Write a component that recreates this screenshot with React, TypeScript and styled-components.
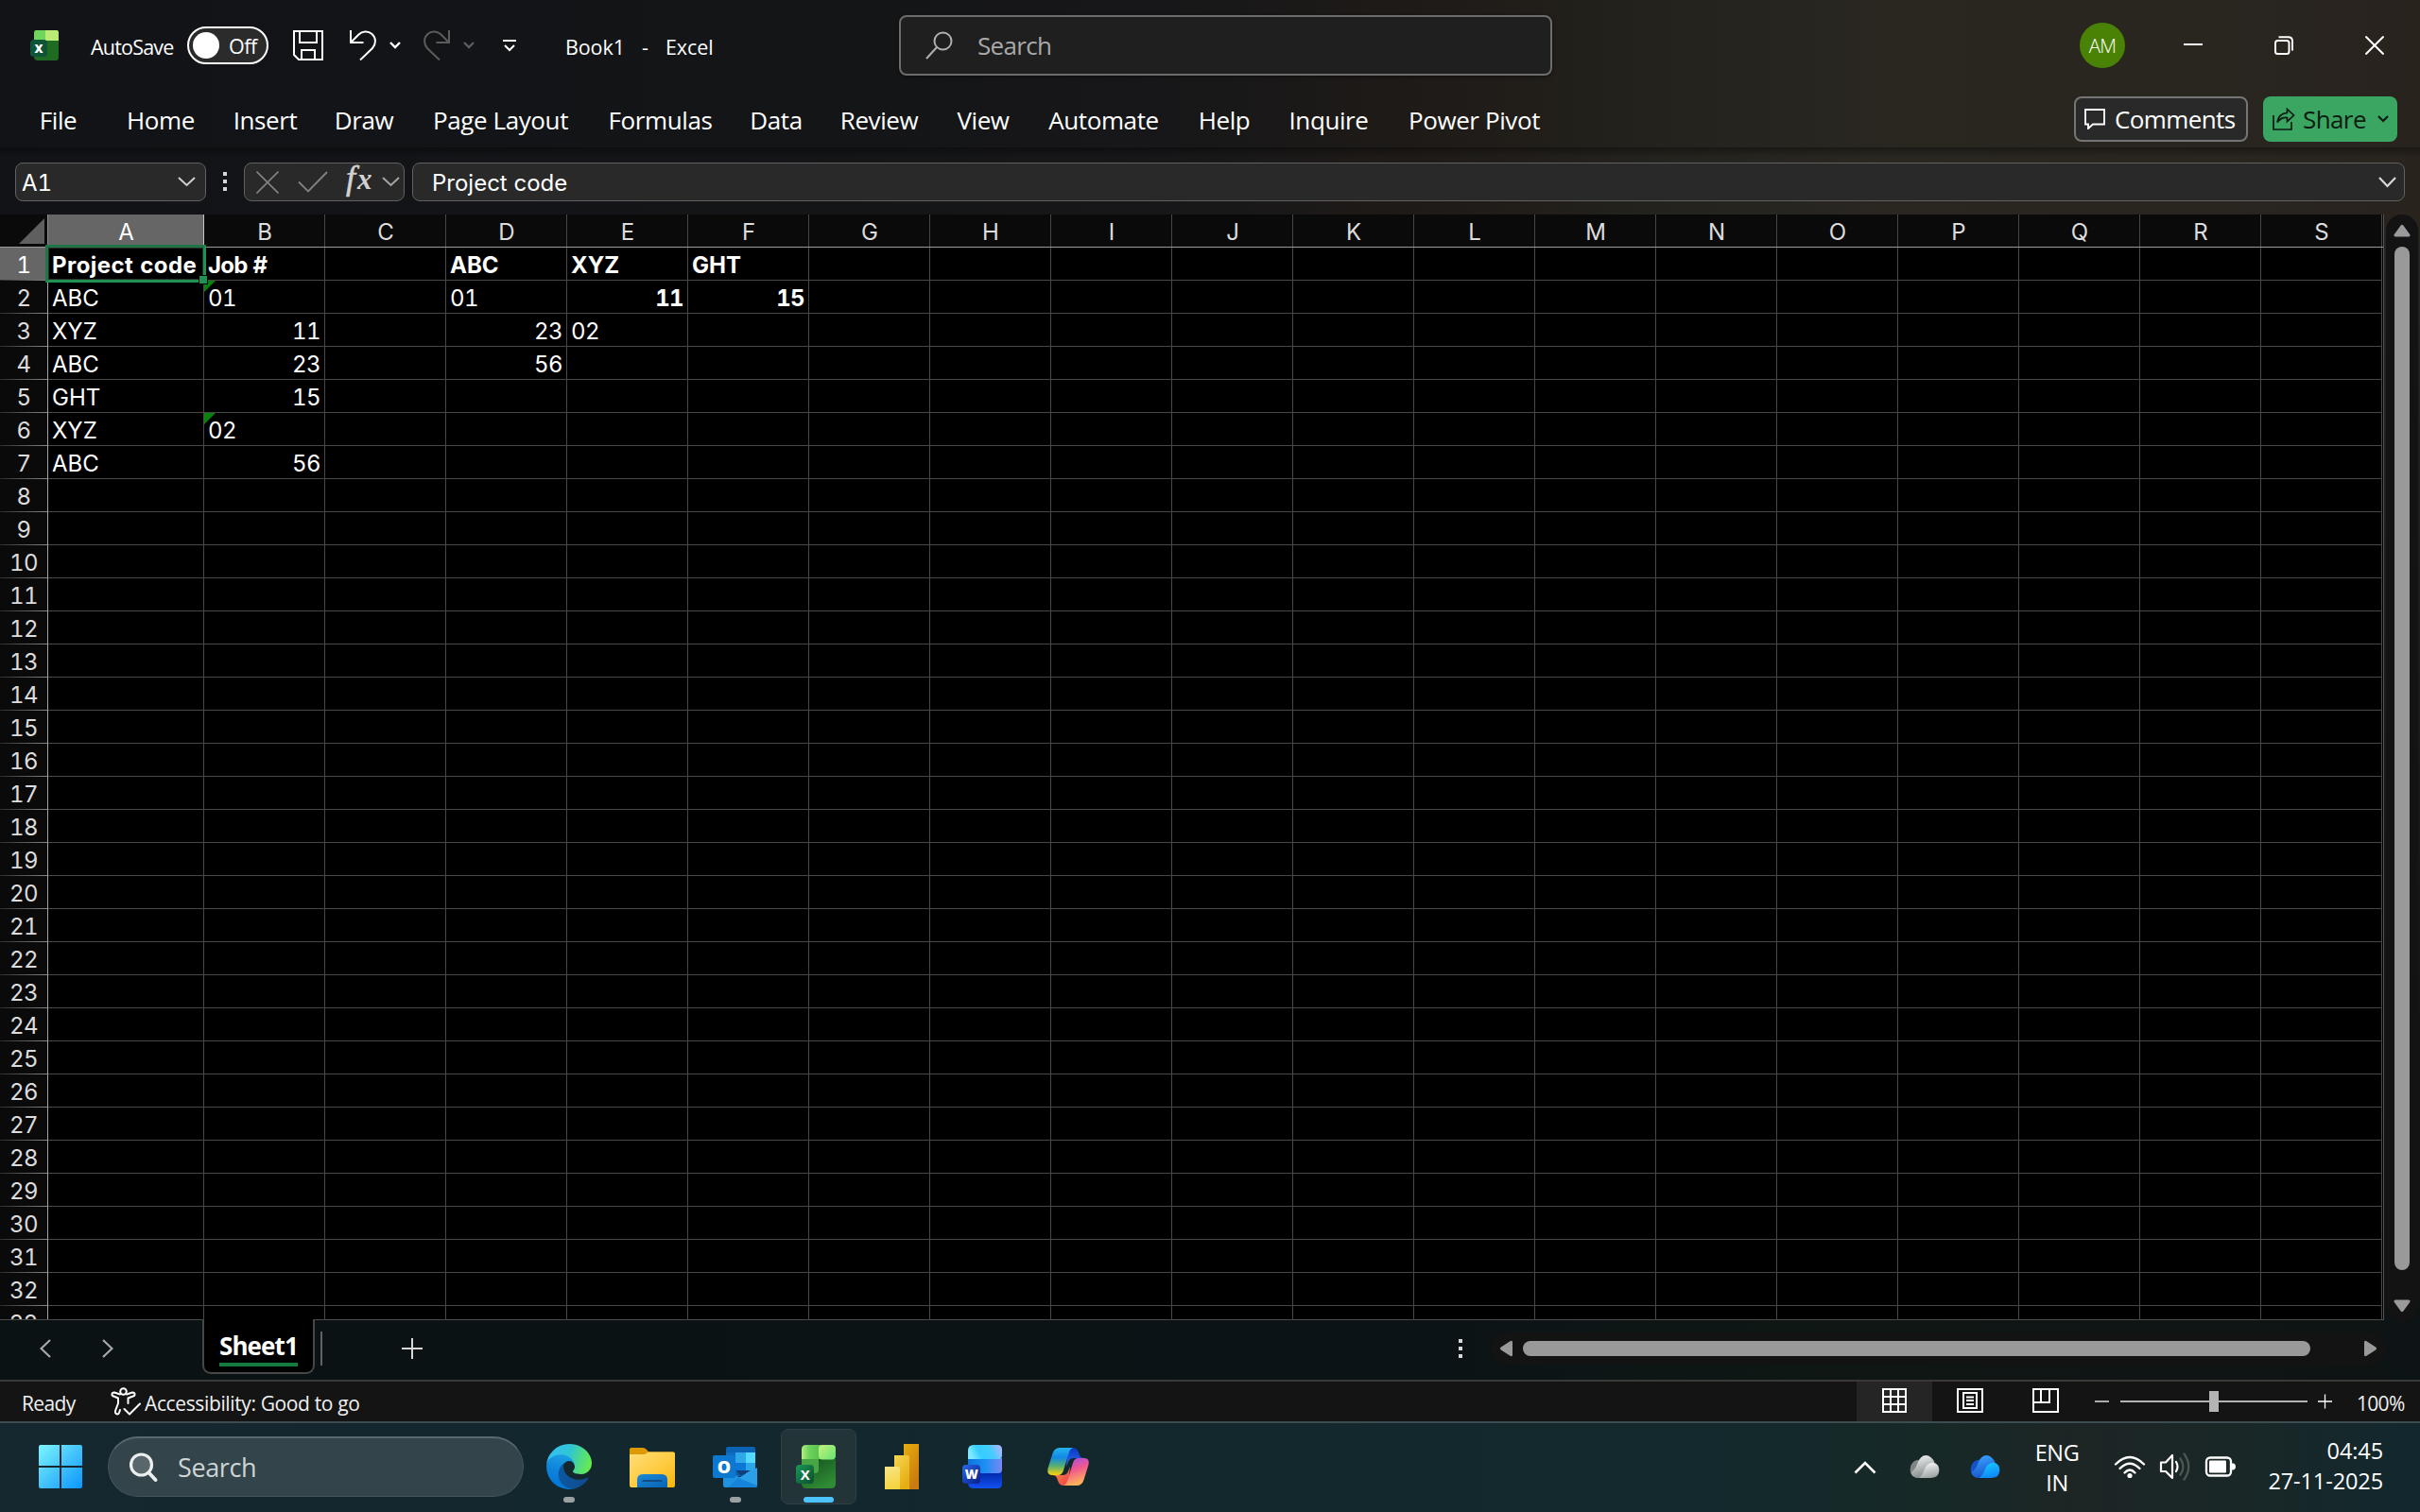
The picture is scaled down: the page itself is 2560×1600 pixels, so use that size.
import { ReactNode } from "react";
import styled, { createGlobalStyle } from "styled-components";

const UI = `"Open Sans", "Noto Sans", sans-serif`;
const SHEET = `Inter, "Liberation Sans", sans-serif`;

type CellData = { text: string; bold?: boolean; right?: boolean; flag?: boolean; track?: number };

const columns = "ABCDEFGHIJKLMNOPQRS".split("");
const rows = Array.from({ length: 33 }, (_, i) => i + 1);

const cells: Record<string, CellData> = {
    A1: { text: "Project code", bold: true, track: 0.45 },
    B1: { text: "Job #", bold: true, track: -0.7 },
    D1: { text: "ABC", bold: true },
    E1: { text: "XYZ", bold: true },
    F1: { text: "GHT", bold: true },
    A2: { text: "ABC" },
    B2: { text: "01", flag: true, track: -0.5 },
    D2: { text: "01", track: -0.5 },
    E2: { text: "11", bold: true, right: true },
    F2: { text: "15", bold: true, right: true },
    A3: { text: "XYZ" },
    B3: { text: "11", right: true },
    D3: { text: "23", right: true },
    E3: { text: "02", track: -0.5 },
    A4: { text: "ABC" },
    B4: { text: "23", right: true },
    D4: { text: "56", right: true },
    A5: { text: "GHT" },
    B5: { text: "15", right: true },
    A6: { text: "XYZ" },
    B6: { text: "02", flag: true, track: -0.5 },
    A7: { text: "ABC" },
    B7: { text: "56", right: true },
};

const tabs = [
    { label: "File", width: 41, after: 52 },
    { label: "Home", width: 72, after: 42 },
    { label: "Insert", width: 65, after: 41 },
    { label: "Draw", width: 62, after: 41 },
    { label: "Page Layout", width: 145, after: 42 },
    { label: "Formulas", width: 109, after: 40 },
    { label: "Data", width: 56, after: 40 },
    { label: "Review", width: 82, after: 40 },
    { label: "View", width: 58, after: 40 },
    { label: "Automate", width: 117, after: 41 },
    { label: "Help", width: 56, after: 41 },
    { label: "Inquire", width: 83, after: 42 },
    { label: "Power Pivot", width: 141, after: 0 },
];

export default function App() {
    return (
        <Screen>
            <GlobalStyle />
            <TitleBar />
            <Ribbon />
            <FormulaBar />
            <Workspace />
            <StatusBar />
            <Taskbar />
        </Screen>
    );
}

function TitleBar() {
    return (
        <TitleRow>
            <Item $left={32}><ExcelSmall /></Item>
            <TitleText $left={34} $width={88} $track={-0.8}>AutoSave</TitleText>
            <Toggle>
                <Knob />
                <ToggleText>Off</ToggleText>
            </Toggle>
            <Item $left={26}>
                <svg width="32" height="32" viewBox="0 0 32 32" fill="none" stroke="#fff" strokeWidth="2">
                    <path d="M1 1H31V31H6L1 26Z M7 1V13H25V1 M9 31V21H23V31" />
                </svg>
            </Item>
            <Item $left={28}><UndoIcon color="#fff" /></Item>
            <Item $left={14}><Chevron width={12} height={6} color="#fff" stroke={2.4} /></Item>
            <Item $left={24} $flip><UndoIcon color="#5c5c5c" /></Item>
            <Item $left={14}><Chevron width={12} height={6} color="#5c5c5c" stroke={2.4} /></Item>
            <Item $left={30}>
                <svg width="14" height="14" viewBox="0 0 14 14" fill="none" stroke="#fff" strokeWidth="2">
                    <path d="M0 2H14 M2 7L7 12L12 7" />
                </svg>
            </Item>
            <DocTitle $left={52} $width={157} $track={-0.1}>Book1&nbsp; - &nbsp;Excel</DocTitle>
            <SearchBox>
                <svg width="30" height="30" viewBox="0 0 30 30" fill="none" stroke="#b0b0b0" strokeWidth="2">
                    <circle cx="18.5" cy="10.5" r="9" />
                    <path d="M12 17L1 29" />
                </svg>
                <span>Search</span>
            </SearchBox>
            <Avatar>AM</Avatar>
            <Item $left={62}>
                <svg width="20" height="20"><path d="M0 9H20" stroke="#fff" strokeWidth="2" /></svg>
            </Item>
            <Item $left={76}>
                <svg width="20" height="20" viewBox="0 0 20 20" fill="none" stroke="#fff" strokeWidth="2">
                    <rect x="1" y="5" width="14.5" height="14" rx="2.5" />
                    <path d="M4.5 1.2H14.5Q19 1.2 19 5.5V15.5" />
                </svg>
            </Item>
            <Item $left={76}>
                <svg width="20" height="20" stroke="#fff" strokeWidth="2"><path d="M0.5 0.5L19.5 19.5M19.5 0.5L0.5 19.5" /></svg>
            </Item>
        </TitleRow>
    );
}

function Ribbon() {
    return (
        <RibbonRow>
            {tabs.map((tab) => (
                <Tab key={tab.label} $width={tab.width} $after={tab.after}>{tab.label}</Tab>
            ))}
            <CommentsButton>
                <svg width="22" height="22" viewBox="0 0 22 22" fill="none" stroke="#fff" strokeWidth="1.8">
                    <path d="M1 1H21V16.5H9L4 21V16.5H1Z" />
                </svg>
                <span>Comments</span>
            </CommentsButton>
            <ShareButton>
                <svg width="24" height="24" viewBox="0 0 24 24" fill="none" stroke="#0c1a12" strokeWidth="1.7">
                    <path d="M1 8V23H20V15" />
                    <path d="M15.5 1.5L22.5 8L15.5 14.5V10.5Q9 10 5 15.5Q6.500 6 15.5 5.300Z" />
                </svg>
                <span>Share</span>
                <Chevron width={12} height={6} color="#0c1a12" stroke={2.2} />
            </ShareButton>
        </RibbonRow>
    );
}

function FormulaBar() {
    return (
        <FormulaRow>
            <NameBox>
                <span>A1</span>
                <Chevron width={19} height={9} color="#d0d0d0" stroke={2} />
            </NameBox>
            <Dots />
            <FxBox>
                <svg width="24" height="24" stroke="#828282" strokeWidth="1.6"><path d="M0.500 0.500L23.500 23.500M23.500 0.500L0.500 23.500" /></svg>
                <svg width="32" height="23" fill="none" stroke="#828282" strokeWidth="1.8"><path d="M1 11.500L11 21.500L31 1" /></svg>
                <Fx><FxBig>f</FxBig>x</Fx>
                <Chevron width={19} height={9} color="#a5a5a5" stroke={2} />
            </FxBox>
            <FormulaBox>
                <span>Project code</span>
                <Chevron width={19} height={10} color="#d8d8d8" stroke={2.2} />
            </FormulaBox>
        </FormulaRow>
    );
}

function Workspace() {
    return (
        <WorkArea>
            <SheetColumn>
                <Sheet>
                    <HeaderRow>
                        <Corner>
                            <svg width="27" height="27"><path d="M27 0V27H0Z" fill="#5f5f5f" /></svg>
                        </Corner>
                        {columns.map((name) => (
                            <ColumnHeader key={name} $active={name === "A"}>{name}</ColumnHeader>
                        ))}
                    </HeaderRow>
                    {rows.map((row) => (
                        <SheetRow key={row}>
                            <RowHeader $active={row === 1}>{row}</RowHeader>
                            {columns.map((name) => {
                                const data = cells[name + row];
                                return (
                                    <Cell key={name} $wide={name === "A"} $bold={data?.bold} $right={data?.right} $track={data?.track}>
                                        {data?.flag && <ErrorFlag />}
                                        {data?.text}
                                        {name + row === "A1" && <Selection><Handle /></Selection>}
                                    </Cell>
                                );
                            })}
                        </SheetRow>
                    ))}
                </Sheet>
                <SheetTabs>
                    <SheetNav>
                        <SideChevron />
                        <SideChevron $flip />
                    </SheetNav>
                    <SheetTab><span>Sheet1</span></SheetTab>
                    <TabDivider />
                    <svg width="22" height="24" stroke="#d8d8d8" strokeWidth="2"><path d="M0 12H22M11 1V23" /></svg>
                    <TabDots><Dots /></TabDots>
                    <HTrack>
                        <Arrow width={15} height={18} d="M14 2V16Q13.500 18 11.500 16.800L1.500 10.200Q0.300 9 1.500 7.800L11.500 1.200Q13.500 0 14 2Z" />
                        <HThumb />
                        <Arrow width={15} height={18} d="M1 2V16Q1.500 18 3.500 16.800L13.500 10.200Q14.700 9 13.500 7.800L3.500 1.200Q1.500 0 1 2Z" />
                    </HTrack>
                </SheetTabs>
            </SheetColumn>
            <VTrack>
                <Arrow width={18} height={14} d="M2 13.500H16Q18.300 13 17.200 11L10.300 1.400Q9 0 7.700 1.400L0.800 11Q-0.300 13 2 13.500Z" />
                <VThumb />
                <Arrow width={18} height={14} d="M2 0.500H16Q18.300 1 17.200 3L10.300 12.600Q9 14 7.700 12.600L0.800 3Q-0.300 1 2 0.500Z" />
            </VTrack>
        </WorkArea>
    );
}

function StatusBar() {
    return (
        <StatusRow>
            <StatusText $left={23} $width={58} $track={-0.6}>Ready</StatusText>
            <Item $left={36}>
                <svg width="32" height="30" viewBox="0 0 32 30" fill="none" stroke="#fff" strokeWidth="2" strokeLinejoin="round" strokeLinecap="round">
                    <circle cx="13.500" cy="4.500" r="3.300" />
                    <path d="M10 7.500L4 5.500Q1 5.500 1.500 8L2 9L8 11.500V17L5 25Q4.500 28 7 28.500Q8.500 28.500 9 27L10 24" />
                    <path d="M17 7.500L23 5.500Q26 5.500 25.500 8L25 9L18.500 11.500V17" />
                    <path d="M14.500 23L20 28.500L31 17.500" />
                </svg>
            </Item>
            <StatusText $left={4} $width={230} $track={-0.37}>Accessibility: Good to go</StatusText>
            <ViewButtons>
                <ViewButton $active>
                    <svg width="26" height="26" fill="none" stroke="#fff" strokeWidth="2">
                        <path d="M1 1H25V25H1ZM9 1V25M17 1V25M1 9H25M1 17H25" />
                    </svg>
                </ViewButton>
                <ViewButton>
                    <svg width="28" height="26" fill="none" stroke="#fff" strokeWidth="2">
                        <path d="M1 1H27V25H1ZM7 5H21V21H7ZM10 9.500H18M10 13H18M10 17H18" />
                    </svg>
                </ViewButton>
                <ViewButton>
                    <svg width="28" height="26" fill="none" stroke="#fff" strokeWidth="2">
                        <path d="M1 1H27V25H1ZM9 1V15M18 1V15H1" />
                    </svg>
                </ViewButton>
            </ViewButtons>
            <Item $left={12}>
                <svg width="15" height="16" stroke="#fff" strokeWidth="1.300"><path d="M0 8H15" /></svg>
            </Item>
            <Slider><SliderThumb /></Slider>
            <Item $left={11}>
                <svg width="15" height="16" stroke="#fff" strokeWidth="1.300"><path d="M0 8H15M7.500 0.500V15.500" /></svg>
            </Item>
            <StatusText $left={26} $width={51} $track={-0.7}>100%</StatusText>
        </StatusRow>
    );
}

function Taskbar() {
    return (
        <TaskRow>
            <StartButton>
                <svg width="46" height="46" viewBox="0 0 46 46">
                    <defs>
                        <linearGradient id="win" x1="0" y1="0" x2="46" y2="46" gradientUnits="userSpaceOnUse">
                            <stop offset="0" stopColor="#7cf6ff" />
                            <stop offset="0.500" stopColor="#45c4fb" />
                            <stop offset="1" stopColor="#0a96ff" />
                        </linearGradient>
                    </defs>
                    <path fill="url(#win)" d="M2 0H22V22H0V2Q0 0 2 0ZM24 0H44Q46 0 46 2V22H24ZM0 24H22V46H2Q0 46 0 44ZM24 24H46V44Q46 46 44 46H24Z" />
                </svg>
            </StartButton>
            <TaskSearch>
                <svg width="30" height="31" viewBox="0 0 30 31" fill="none" stroke="#eceff0" strokeWidth="3.200" strokeLinecap="round">
                    <circle cx="12.500" cy="13" r="11" fill="#59676c" />
                    <path d="M20.500 21.500L27.500 29" strokeWidth="3.800" />
                </svg>
                <span>Search</span>
            </TaskSearch>
            <Apps>
                <AppSlot mark="dot"><EdgeIcon /></AppSlot>
                <AppSlot><FolderIcon /></AppSlot>
                <AppSlot mark="dot"><OutlookIcon /></AppSlot>
                <AppSlot mark="bar"><ExcelIcon /></AppSlot>
                <AppSlot><PowerBiIcon /></AppSlot>
                <AppSlot><WordIcon /></AppSlot>
                <AppSlot><CopilotIcon /></AppSlot>
            </Apps>
            <Tray>
                <svg width="24" height="15" fill="none" stroke="#fff" strokeWidth="2.600"><path d="M1.500 13.500L12 3L22.500 13.500" /></svg>
                <Item $left={35}><Cloud id="grey" back="#7d8585" mid="#f1f2f2" front="#f8f8f8" end="#9aa0a0" /></Item>
                <Item $left={32}><Cloud id="blue" back="#1551c9" mid="#3aa4ff" front="#19c8ff" end="#0c86f6" /></Item>
                <Language>
                    <span>ENG</span>
                    <span>IN</span>
                </Language>
                <Item $left={37}>
                    <svg width="34" height="26" viewBox="0 0 34 26" fill="none" stroke="#fff" strokeWidth="2.300" strokeLinecap="round">
                        <path d="M2 10.500Q17 -4.500 32 10.500" />
                        <path d="M6.500 15Q17 4.500 27.500 15" />
                        <path d="M11.500 19.500Q17 13.500 22.500 19.500" />
                        <circle cx="17" cy="22.500" r="2.600" fill="#fff" stroke="none" />
                    </svg>
                </Item>
                <Item $left={14}>
                    <svg width="34" height="34" viewBox="0 0 34 34" fill="none" stroke="#fff" strokeWidth="2.200" strokeLinejoin="round" strokeLinecap="round">
                        <path d="M2 12.500H7L14 5V29L7 22H2Z" />
                        <path d="M18 12Q21 17 18 22" />
                        <path d="M22.500 8.500Q28.500 17 22.500 25.500M26.500 3.500Q36 17 26.500 30.500" stroke="#4d5655" />
                    </svg>
                </Item>
                <Item $left={14}>
                    <svg width="34" height="22" viewBox="0 0 34 22">
                        <rect x="2" y="1.500" width="26" height="19" rx="4" fill="none" stroke="#fff" strokeWidth="2.300" />
                        <rect x="5" y="4.500" width="18" height="13" rx="1" fill="#fff" />
                        <path d="M29 7.500H31Q33 8 33 11Q33 14 31 14.500H29Z" fill="#fff" />
                    </svg>
                </Item>
                <Clock>
                    <span>04:45</span>
                    <span>27-11-2025</span>
                </Clock>
            </Tray>
        </TaskRow>
    );
}

function AppSlot({ mark, children }: { mark?: "dot" | "bar"; children: ReactNode }) {
    return (
        <Slot $active={mark === "bar"}>
            {children}
            {mark && <Mark $bar={mark === "bar"} />}
        </Slot>
    );
}

function Chevron({ width, height, color, stroke }: { width: number; height: number; color: string; stroke: number }) {
    return (
        <svg width={width} height={height + 2} fill="none" stroke={color} strokeWidth={stroke}>
            <path d={`M1 1L${width / 2} ${height}L${width - 1} 1`} />
        </svg>
    );
}

function Arrow({ width, height, d }: { width: number; height: number; d: string }) {
    return <svg width={width} height={height} fill="#9a9a9a"><path d={d} /></svg>;
}

function UndoIcon({ color }: { color: string }) {
    return (
        <svg width="28" height="32" viewBox="0 0 28 32" fill="none" stroke={color} strokeWidth="2">
            <path d="M1 0V13H14.500 M1.500 12.500L9.500 4.500C13 1 19 0 23.500 4C28 8 28 14.500 24 19L11 31.500" />
        </svg>
    );
}

function ExcelSmall() {
    return (
        <svg width="30" height="32" viewBox="0 0 30 32">
            <path d="M6 0H17V11H4V3Q4 0 6 0Z" fill="#6fd55c" />
            <path d="M16 0H28Q30 0 30 2V11H16Z" fill="#b9ec74" />
            <path d="M4 11H30V29Q30 32 27 32H8Q4 32 4 28Z" fill="#1f6b22" />
            <rect y="10" width="18" height="18" rx="3.500" fill="#0e5437" />
            <text x="9" y="23.500" fill="#fff" fontSize="12.500" fontWeight="800" textAnchor="middle" fontFamily="Open Sans">X</text>
        </svg>
    );
}

function ExcelIcon() {
    return (
        <svg width="48" height="48" viewBox="0 0 48 48">
            <defs>
                <linearGradient id="xl1" x1="0" y1="0" x2="1" y2="0"><stop stopColor="#b4ee82" /><stop offset="0.400" stopColor="#6cd25b" /><stop offset="1" stopColor="#57c04d" /></linearGradient>
                <linearGradient id="xl2" x1="0" y1="0" x2="1" y2="0.800"><stop stopColor="#c5f07c" /><stop offset="1" stopColor="#6de673" /></linearGradient>
                <linearGradient id="xl3" x1="0" y1="0" x2="0.600" y2="1"><stop stopColor="#14501d" /><stop offset="1" stopColor="#2f8c35" /></linearGradient>
                <linearGradient id="xl4" x1="0" y1="0" x2="1" y2="1"><stop stopColor="#1a9a53" /><stop offset="1" stopColor="#0a4b31" /></linearGradient>
            </defs>
            <path d="M6 16H42V42Q42 47 37 47H11Q6 47 6 42Z" fill="url(#xl3)" />
            <path d="M6 16H24V27Q24 31 20 31H6Z" fill="#48a545" />
            <path d="M11 1H26V16H6V6Q6 1 11 1Z" fill="url(#xl1)" />
            <rect x="24" y="1" width="18" height="15.500" rx="4" fill="url(#xl2)" />
            <rect x="0" y="22" width="19" height="20" rx="4" fill="url(#xl4)" />
            <text x="9.700" y="37.500" fill="#fff" fontSize="15" fontWeight="700" textAnchor="middle" fontFamily="Open Sans">X</text>
        </svg>
    );
}

function WordIcon() {
    return (
        <svg width="48" height="48" viewBox="0 0 48 48">
            <defs>
                <linearGradient id="wd1" x1="0" y1="0.200" x2="1" y2="0"><stop stopColor="#7de8ff" /><stop offset="0.250" stopColor="#35cdff" /><stop offset="0.600" stopColor="#45ccff" /><stop offset="1" stopColor="#c0b4fb" /></linearGradient>
                <linearGradient id="wd2" x1="0" y1="0" x2="1" y2="0"><stop stopColor="#0e74dc" /><stop offset="0.500" stopColor="#1a90f4" /><stop offset="1" stopColor="#7a86f5" /></linearGradient>
                <linearGradient id="wd3" x1="0" y1="0" x2="0" y2="1"><stop stopColor="#0127a8" /><stop offset="1" stopColor="#1351f2" /></linearGradient>
                <linearGradient id="wd4" x1="0" y1="0" x2="1" y2="1"><stop stopColor="#2b68e8" /><stop offset="1" stopColor="#071d85" /></linearGradient>
            </defs>
            <path d="M6 30H42V42Q42 47 37 47H12Q6 47 6 41Z" fill="url(#wd3)" />
            <path d="M6 15H42V27Q42 31 38 31H6Z" fill="url(#wd2)" />
            <path d="M12 1H37Q42 1 42 6V12Q42 16 38 16H6V7Q6 1 12 1Z" fill="url(#wd1)" />
            <rect x="0" y="22" width="19" height="20" rx="4" fill="url(#wd4)" />
            <text x="9.700" y="37" fill="#fff" fontSize="13.500" fontWeight="800" textAnchor="middle" fontFamily="Open Sans">W</text>
        </svg>
    );
}

function OutlookIcon() {
    return (
        <svg width="48" height="48" viewBox="0 0 48 48">
            <path d="M14 5Q14 3 16 3H43Q45 3 45 5V34H14Z" fill="#0a63b4" />
            <path d="M14 9H25V20H14Z" fill="#0f6cc0" />
            <path d="M24 9H35V20H24Z" fill="#2fa8ea" />
            <path d="M35 9H45V20H35Z" fill="#54d9ff" />
            <path d="M24 20H35V30H24Z" fill="#0a78d4" />
            <path d="M35 20H45V29L35 33Z" fill="#2ca6ea" />
            <path d="M24 28H40L30 34Z" fill="#123f79" />
            <path d="M11 26L47 45Q46.500 46 45 46H13Q11 46 11 43Z" fill="#1f93e0" />
            <path d="M47 25V43Q47 46 44 46L27 36Z" fill="#2b9fe8" />
            <path d="M27 36L47 44Q46 46 44 46H16Z" fill="#1684d8" />
            <rect x="0" y="12" width="24" height="24" rx="2" fill="#0d78d0" />
            <text x="12" y="30.500" fill="#fff" fontSize="18" fontWeight="800" textAnchor="middle" fontFamily="Open Sans">O</text>
        </svg>
    );
}

function PowerBiIcon() {
    return (
        <svg width="48" height="48" viewBox="0 0 48 48">
            <defs>
                <linearGradient id="pb1" x1="0" y1="0" x2="0.500" y2="1"><stop stopColor="#e8ae0d" /><stop offset="1" stopColor="#c97a10" /></linearGradient>
                <linearGradient id="pb2" x1="0" y1="0" x2="0.500" y2="1"><stop stopColor="#f6d551" /><stop offset="1" stopColor="#e5ad12" /></linearGradient>
                <linearGradient id="pb3" x1="0" y1="0" x2="0.300" y2="1"><stop stopColor="#f9e589" /><stop offset="1" stopColor="#f5d442" /></linearGradient>
            </defs>
            <path d="M26 0H42V48H26Z" fill="url(#pb1)" />
            <path d="M16 12H30Q32 12 32 14V48H16Z" fill="url(#pb2)" />
            <path d="M6 24H20Q22 24 22 26V48H6Z" fill="url(#pb3)" />
        </svg>
    );
}

function FolderIcon() {
    return (
        <svg width="48" height="48" viewBox="0 0 48 48">
            <defs>
                <linearGradient id="fd1" x1="0" y1="0" x2="1" y2="1"><stop stopColor="#ffdd78" /><stop offset="0.600" stopColor="#fdca3c" /><stop offset="1" stopColor="#f9b50c" /></linearGradient>
                <linearGradient id="fd2" x1="0" y1="0" x2="1" y2="1"><stop stopColor="#1a8ad8" /><stop offset="1" stopColor="#0764b4" /></linearGradient>
            </defs>
            <path d="M0 5.500Q0 4 2 4H14Q16 4 17.500 5.500L20.500 8.500H46V20H0Z" fill="#dd9a04" />
            <path d="M0 11H16L20 8.500H46.500Q48 8.500 48 10V44Q48 46 46 46H2Q0 46 0 44Z" fill="url(#fd1)" />
            <path d="M8 46V38Q8 32 14 32H34Q40 32 40 38V46Z" fill="url(#fd2)" />
            <path d="M14.500 39H33.500" stroke="#114b86" strokeWidth="2.200" strokeLinecap="round" />
        </svg>
    );
}

function EdgeIcon() {
    return (
        <svg width="48" height="48" viewBox="4.630 4.920 256 256">
            <defs>
                <linearGradient id="eg1" x1="63" y1="177" x2="241" y2="177" gradientUnits="userSpaceOnUse"><stop stopColor="#0c59a4" /><stop offset="1" stopColor="#114a8b" /></linearGradient>
                <linearGradient id="eg2" x1="110" y1="80" x2="60" y2="240" gradientUnits="userSpaceOnUse"><stop stopColor="#1b9de2" /><stop offset="0.500" stopColor="#0f83db" /><stop offset="1" stopColor="#0078d4" /></linearGradient>
                <linearGradient id="eg3" x1="20" y1="60" x2="250" y2="130" gradientUnits="userSpaceOnUse"><stop stopColor="#35c1f1" /><stop offset="0.450" stopColor="#2fc5d3" /><stop offset="0.800" stopColor="#55de7a" /><stop offset="1" stopColor="#66eb4f" /></linearGradient>
            </defs>
            <path fill="url(#eg1)" d="M235.680 195.460a93.730 93.730 0 0 1-10.540 4.710 101.870 101.870 0 0 1-35.900 6.460c-47.320 0-88.540-32.550-88.540-74.320A31.480 31.480 0 0 1 117.130 105c-42.800 1.800-53.800 46.400-53.800 72.530 0 73.880 68.090 81.370 82.760 81.370 7.910 0 19.840-2.300 27-4.560l1.310-.44a128.340 128.340 0 0 0 66.600-52.800 4 4 0 0 0-5.320-5.640z" />
            <path fill="url(#eg2)" d="M110.340 246.340A79.200 79.200 0 0 1 87.600 225a80.720 80.720 0 0 1 29.530-120c3.120-1.470 8.450-4.130 15.540-4a32.350 32.350 0 0 1 25.690 13 31.880 31.880 0 0 1 6.360 18.660c0-.21 24.460-79.600-80-79.600-43.900 0-80 41.660-80 78.210a130.150 130.150 0 0 0 12.110 56 128 128 0 0 0 156.380 67.110 75.550 75.550 0 0 1-62.780-8z" />
            <path fill="url(#eg3)" d="M156.940 153.780c-.81 1.050-3.300 2.500-3.300 5.660 0 2.610 1.700 5.120 4.720 7.230 14.380 10 41.490 8.680 41.560 8.680a59.560 59.560 0 0 0 30.270-8.350 61.380 61.380 0 0 0 30.430-52.880c.26-22.410-8-37.310-11.340-43.910C228.090 28.760 182.350 4.920 132.610 4.920a128 128 0 0 0-128 126.200c.48-36.540 36.800-66.050 80-66.050 3.500 0 23.460.34 42 10.070 16.340 8.580 24.900 18.940 30.850 29.210 6.180 10.670 7.280 24.150 7.280 29.520s-2.740 13.330-7.800 19.910z" />
        </svg>
    );
}

function CopilotIcon() {
    return (
        <svg width="48" height="48" viewBox="0 0 48 48">
            <defs>
                <linearGradient id="cp1" x1="0" y1="0" x2="0" y2="1"><stop stopColor="#24b4ee" /><stop offset="0.350" stopColor="#1488e6" /><stop offset="0.650" stopColor="#4fae77" /><stop offset="1" stopColor="#fdd20c" /></linearGradient>
                <linearGradient id="cp2" x1="0" y1="0" x2="0.300" y2="1"><stop stopColor="#9d4df0" /><stop offset="0.500" stopColor="#f0588e" /><stop offset="1" stopColor="#feb05c" /></linearGradient>
                <linearGradient id="cp3" x1="0" y1="0" x2="0" y2="1"><stop stopColor="#0c37c4" /><stop offset="1" stopColor="#2a6df0" /></linearGradient>
                <linearGradient id="cp4" x1="0" y1="0" x2="1" y2="1"><stop stopColor="#ff9348" /><stop offset="1" stopColor="#ea3d49" /></linearGradient>
            </defs>
            <path d="M24 4H29Q33 4 34.500 8L36 12Q37 15 41 15H30Q26 15 24.500 18L22 24Z" fill="url(#cp3)" />
            <path d="M24 44H19Q15 44 13.500 40L12 36Q11 33 7 33H18Q22 33 23.500 30L26 24Z" fill="url(#cp4)" />
            <path d="M15 4H29Q26 5 24.500 10L19 28Q17.500 33 13 33H7Q1 33 2.500 26L7.500 10Q9.500 4 15 4Z" fill="url(#cp1)" />
            <path d="M33 44H19Q22 43 23.500 38L29 20Q30.500 15 35 15H41Q47 15 45.500 22L40.500 38Q38.500 44 33 44Z" fill="url(#cp2)" />
        </svg>
    );
}

function Cloud({ id, back, mid, front, end }: { id: string; back: string; mid: string; front: string; end: string }) {
    return (
        <svg width="32" height="24" viewBox="0 0 32 25">
            <defs>
                <linearGradient id={id + "1"} x1="0.300" y1="0" x2="0.600" y2="1"><stop stopColor={mid} /><stop offset="1" stopColor={back} /></linearGradient>
                <linearGradient id={id + "2"} x1="0.300" y1="0" x2="0.600" y2="1"><stop stopColor={front} /><stop offset="1" stopColor={end} /></linearGradient>
            </defs>
            <path d="M0 16Q0 7 8 5L16 8L10 25Q0 25 0 16Z" fill={back} />
            <path d="M1 19Q6 15 8 9Q11 0 18 0Q24 1 27 8L14 25H9Q3 25 1 19Z" fill={`url(#${id}1)`} />
            <path d="M10 25Q14 21 16 15Q19 8 25 8Q32 9 32 16Q32 25 23 25Z" fill={`url(#${id}2)`} />
        </svg>
    );
}

const SideChevron = ({ $flip }: { $flip?: boolean }) => (
    <svg width="12" height="20" fill="none" stroke="#a8a8a8" strokeWidth="2.200">
        <path d={$flip ? "M1 1L10.500 10L1 19" : "M11 1L1.500 10L11 19"} />
    </svg>
);

const GlobalStyle = createGlobalStyle`
    * {
        box-sizing: border-box;
    }
    body {
        margin: 0;
        background: #000;
    }
    svg {
        display: block;
        flex: none;
    }
`

const Screen = styled.div`
    display: flex;
    flex-direction: column;
    width: 2560px;
    height: 1600px;
    overflow: hidden;
    color: #fff;
    font-family: ${UI};
    font-size: 26px;
    white-space: nowrap;
    background: linear-gradient(90deg, #111317 0%, #141517 35%, #171719 48%, #1e1a17 58%, #24221d 68%, #292720 78%, #29251f 92%, #29231e 100%);
`

const Item = styled.div<{ $left: number; $flip?: boolean }>`
    flex: none;
    margin-left: ${(p) => p.$left}px;
    transform: ${(p) => (p.$flip ? "scaleX(-1)" : "none")};
`

const TitleRow = styled.header`
    display: flex;
    align-items: center;
    flex: none;
    height: 96px;
`

const TitleText = styled.span<{ $left: number; $width: number; $track: number }>`
    flex: none;
    width: ${(p) => p.$width}px;
    margin-left: ${(p) => p.$left}px;
    padding-top: 3px;
    font-size: 21.5px;
    line-height: 30px;
    letter-spacing: ${(p) => p.$track}px;
`

const DocTitle = styled(TitleText)`
    word-spacing: 3.6px;
`

const Toggle = styled.div`
    display: flex;
    align-items: center;
    flex: none;
    width: 86px;
    height: 40px;
    margin-left: 14px;
    padding-left: 4px;
    border: 2px solid #fff;
    border-radius: 20px;
    background: #2b2b2b;
`

const Knob = styled.div`
    width: 28px;
    height: 28px;
    border-radius: 50%;
    background: #fff;
`

const ToggleText = styled.span`
    margin-left: 10px;
    padding-top: 2px;
    font-size: 21.5px;
    line-height: 28px;
    letter-spacing: -0.5px;
`

const SearchBox = styled.div`
    display: flex;
    align-items: center;
    gap: 25px;
    flex: none;
    width: 691px;
    height: 64px;
    margin-left: 196px;
    padding-left: 26px;
    border: 2px solid #6d6d6d;
    border-radius: 8px;
    background: #1f1f1f;
    color: #a9a9a9;
    box-shadow: 0 1px 4px rgba(0, 0, 0, 0.5);
    letter-spacing: -0.7px;
`

const Avatar = styled.div`
    display: flex;
    align-items: center;
    justify-content: center;
    flex: none;
    width: 48px;
    height: 48px;
    margin-left: 558px;
    border-radius: 50%;
    background: #498205;
    font-size: 20.5px;
    font-weight: 300;
    letter-spacing: -0.8px;
`

const RibbonRow = styled.nav`
    display: flex;
    align-items: center;
    flex: none;
    height: 60px;
    padding: 0 24px 0 41px;
`

const Tab = styled.span<{ $width: number; $after: number }>`
    display: flex;
    justify-content: center;
    flex: none;
    width: ${(p) => p.$width}px;
    margin-right: ${(p) => p.$after}px;
    padding-top: 2px;
    letter-spacing: -0.4px;
`

const CommentsButton = styled.button`
    display: flex;
    align-items: center;
    gap: 10px;
    width: 184px;
    height: 48px;
    margin-left: auto;
    padding: 0 0 0 9px;
    border: 2px solid #757575;
    border-radius: 8px;
    background: #292929;
    color: #fff;
    font: 26px ${UI};
    letter-spacing: -0.6px;
`

const ShareButton = styled.button`
    display: flex;
    align-items: center;
    width: 142px;
    height: 48px;
    margin-left: 16px;
    padding: 0 9px 0 10px;
    border: 0;
    border-radius: 8px;
    background: #3aa661;
    color: #0c1a12;
    font: 26px ${UI};
    letter-spacing: -0.6px;

    span {
        flex: 1;
        margin-left: 8px;
        text-align: left;
    }
`

const FormulaRow = styled.div`
    display: flex;
    align-items: flex-start;
    flex: none;
    height: 71px;
    padding: 16px 16px 0;
    font-family: ${SHEET};
    font-size: 24px;
    background: linear-gradient(180deg, rgba(0, 0, 0, 0.35), rgba(0, 0, 0, 0) 10px);
`

const InputBox = styled.div`
    display: flex;
    align-items: center;
    flex: none;
    height: 41px;
    border: 1px solid #616161;
    border-radius: 8px;
    background: #292929;

    span {
        padding-top: 1px;
    }
`

const NameBox = styled(InputBox)`
    justify-content: space-between;
    width: 202px;
    padding: 0 10px 0 6px;
    font-feature-settings: "tnum";
`

const Dots = styled.i`
    flex: none;
    width: 4px;
    height: 20px;
    margin: 10px 18px 0;
    background: repeating-linear-gradient(180deg, #d6d6d6 0 4px, transparent 4px 8px);
`

const FxBox = styled(InputBox)`
    width: 170px;
    padding-left: 12px;

    svg + svg {
        margin-left: 20px;
    }
    svg:last-child {
        margin-left: 10px;
    }
`

const Fx = styled.span`
    width: 28px;
    margin: -8px 0 0 19px;
    color: #d2d2d2;
    font: italic bold 31px/34px "Liberation Serif", serif;
`

const FxBig = styled.span`
    margin-right: 2px;
    font-size: 36px;
    font-weight: 400;
    -webkit-text-stroke: 0.6px #d2d2d2;
`

const FormulaBox = styled(InputBox)`
    justify-content: space-between;
    flex: 1;
    margin-left: 8px;
    padding: 0 8px 0 20px;
`

const WorkArea = styled.main`
    display: flex;
    flex: none;
    height: 1233px;
    background: linear-gradient(180deg, rgba(12, 18, 20, 0) 0%, #0f1414 75%, #0d1415 100%);
`

const SheetColumn = styled.div`
    flex: none;
    width: 2522px;
`

const Sheet = styled.section`
    height: 1169px;
    overflow: hidden;
    border-right: 1px solid #555;
    background: #000;
    font-family: ${SHEET};
    font-size: 24px;
    font-feature-settings: "tnum";
`

const HeaderRow = styled.div`
    display: flex;
    height: 35px;
    border-bottom: 1px solid #9b9b9b;
    background: #0a0a0a;
    color: #dcdcdc;
`

const Corner = styled.div`
    flex: none;
    width: 51px;
    padding: 4px 0 0 20px;
    border-right: 1px solid #8f8f8f;
`

const ColumnHeader = styled.div<{ $active: boolean }>`
    display: flex;
    align-items: center;
    justify-content: center;
    flex: none;
    width: ${(p) => (p.$active ? 165 : 128)}px;
    padding: 3px 0 0 1px;
    border-right: 1px solid ${(p) => (p.$active ? "#c4c4c4" : "#484848")};
    background: ${(p) => (p.$active ? "#666" : "transparent")};
    color: ${(p) => (p.$active ? "#fff" : "inherit")};
`

const SheetRow = styled.div`
    display: flex;
    height: 35px;
`

const RowHeader = styled.div<{ $active: boolean }>`
    display: flex;
    align-items: center;
    justify-content: center;
    flex: none;
    width: 51px;
    padding-top: 2px;
    border-right: 1px solid #a5a5a5;
    background: linear-gradient(90deg, #2c2c2c, #858585) bottom / 100% 1px no-repeat, ${(p) => (p.$active ? "#666" : "#0a0a0a")};
    color: ${(p) => (p.$active ? "#fff" : "#dcdcdc")};
    letter-spacing: -0.6px;
`

const Cell = styled.div<{ $wide: boolean; $bold?: boolean; $right?: boolean; $track?: number }>`
    position: relative;
    display: flex;
    align-items: center;
    justify-content: ${(p) => (p.$right ? "flex-end" : "flex-start")};
    flex: none;
    width: ${(p) => (p.$wide ? 165 : 128)}px;
    padding: 2px 4px 0;
    border-right: 1px solid #484848;
    border-bottom: 1px solid #484848;
    font-weight: ${(p) => (p.$bold ? 700 : 400)};
    letter-spacing: ${(p) => p.$track ?? (p.$right ? -0.6 : 0)}px;
`

const ErrorFlag = styled.i`
    position: absolute;
    top: 0;
    left: 0;
    border-top: 12px solid #0a8010;
    border-right: 12px solid transparent;
`

const Selection = styled.div`
    position: absolute;
    top: -3px;
    left: -3px;
    z-index: 2;
    width: 170px;
    height: 40px;
    border: 3px solid #1f7546;
    border-right-color: #1f9150;
    border-bottom-color: #1f9150;
    box-shadow: inset 0 0 0 1px #2c2c2c;
`

const Handle = styled.i`
    position: absolute;
    right: -5px;
    bottom: -5px;
    width: 10px;
    height: 10px;
    border: 1px solid #000;
    background: #1f9150;
`

const SheetTabs = styled.div`
    display: flex;
    align-items: center;
    height: 64px;
    padding-bottom: 3px;
    border-top: 1px solid #4c4c4c;
    background: linear-gradient(90deg, #0b1214, #0b1316 60%, #0f1715 75%, #0e1414);
`

const SheetNav = styled.div`
    display: flex;
    gap: 54px;
    width: 214px;
    padding-left: 42px;
`

const SheetTab = styled.div`
    align-self: flex-start;
    flex: none;
    width: 119px;
    height: 58px;
    margin-top: -1px;
    padding: 12px 16px 0;
    border: 2px solid #474747;
    border-top: 0;
    border-radius: 0 0 9px 9px;
    background: #000;
    font-weight: 700;
    letter-spacing: -0.9px;
    line-height: 32px;

    span {
        display: block;
        padding-bottom: 2px;
        border-bottom: 4px solid #147c41;
    }
`

const TabDivider = styled.i`
    width: 1.500px;
    height: 36px;
    margin: 0 84px 0 6px;
    background: #636363;
`

const TabDots = styled.div`
    display: flex;
    margin: -10px 12px 0 auto;
`

const HTrack = styled.div`
    display: flex;
    align-items: center;
    flex: none;
    width: 947px;
    height: 34px;
    margin-right: -2px;
    padding: 0 9px;
    border-radius: 17px;
    background: #131313;
`

const HThumb = styled.div`
    width: 833px;
    height: 16px;
    margin: 0 56px 0 10px;
    border-radius: 8px;
    background: #999;
`

const VTrack = styled.div`
    display: flex;
    flex-direction: column;
    align-items: center;
    flex: none;
    width: 34px;
    height: 1172px;
    margin-left: 2px;
    padding: 10px 0;
    border-radius: 17px;
    background: #131313;
`

const VThumb = styled.div`
    width: 16px;
    height: 1083px;
    margin: 10px 0 auto;
    border-radius: 8px;
    background: #999;
`

const StatusRow = styled.footer`
    display: flex;
    align-items: center;
    flex: none;
    height: 44px;
    padding-right: 16px;
    border-top: 2px solid #3b3838;
    background: #141414;
`

const StatusText = styled.span<{ $left: number; $width: number; $track: number }>`
    flex: none;
    width: ${(p) => p.$width}px;
    margin-left: ${(p) => p.$left}px;
    padding-top: 3px;
    color: #f0f0f0;
    font-size: 21px;
    line-height: 30px;
    letter-spacing: ${(p) => p.$track}px;
`

const ViewButtons = styled.div`
    display: flex;
    margin-left: auto;
`

const ViewButton = styled.div<{ $active?: boolean }>`
    display: flex;
    align-items: center;
    justify-content: center;
    width: 80px;
    height: 42px;
    padding-bottom: 2px;
    background: ${(p) => (p.$active ? "#252525" : "transparent")};
`

const Slider = styled.div`
    display: flex;
    align-items: center;
    justify-content: center;
    flex: none;
    width: 198px;
    height: 22px;
    margin-left: 12px;
    background: linear-gradient(#b4b4b4, #b4b4b4) center / 100% 2px no-repeat;
`

const SliderThumb = styled.div`
    width: 10px;
    height: 22px;
    background: #b4b4b4;
`

const TaskRow = styled.div`
    display: flex;
    align-items: center;
    flex: none;
    height: 96px;
    padding-bottom: 2px;
    border-top: 2px solid #3d4c4f;
    background: linear-gradient(90deg, #15272f 0%, #13272e 25%, #12282c 50%, #13292c 72%, #172927 80%, #1d2525 86%, #1a2727 92%, #12282e 100%);
`

const StartButton = styled.div`
    flex: none;
    margin-left: 41px;
`

const TaskSearch = styled.div`
    display: flex;
    align-items: center;
    gap: 21px;
    flex: none;
    width: 440px;
    height: 64px;
    margin-left: 27px;
    padding-left: 22px;
    border: 1px solid #43545a;
    border-top: 2px solid #5a696e;
    border-radius: 32px;
    background: #33454b;
    color: #cfd4d5;
    font-size: 27px;
    letter-spacing: -0.4px;
`

const Apps = styled.div`
    display: flex;
    gap: 8px;
    margin-left: 8px;
`

const Slot = styled.div<{ $active: boolean }>`
    position: relative;
    width: 80px;
    height: 80px;
    padding: 15px 16px;
    border: 1px solid ${(p) => (p.$active ? "#2f4047" : "transparent")};
    border-radius: 8px;
    background: ${(p) => (p.$active ? "#233439" : "transparent")};

    svg {
        margin-left: -1px;
    }
`

const Mark = styled.i<{ $bar: boolean }>`
    position: absolute;
    bottom: 1px;
    left: ${(p) => (p.$bar ? 23 : 33)}px;
    width: ${(p) => (p.$bar ? 32 : 12)}px;
    height: 6px;
    border-radius: 3px;
    background: ${(p) => (p.$bar ? "#4cc2ff" : "#9aa1a3")};
`

const Tray = styled.div`
    display: flex;
    align-items: center;
    flex: none;
    margin-left: auto;
    padding-right: 39px;
    font-size: 23.500px;
    line-height: 32px;
`

const Language = styled.div`
    display: flex;
    flex-direction: column;
    align-items: center;
    width: 46px;
    margin: 2px 0 0 37px;
    letter-spacing: -0.4px;
`

const Clock = styled.div`
    display: flex;
    flex-direction: column;
    align-items: flex-end;
    width: 124px;
    margin: -3px 0 0 31px;
    letter-spacing: -0.1px;
`
